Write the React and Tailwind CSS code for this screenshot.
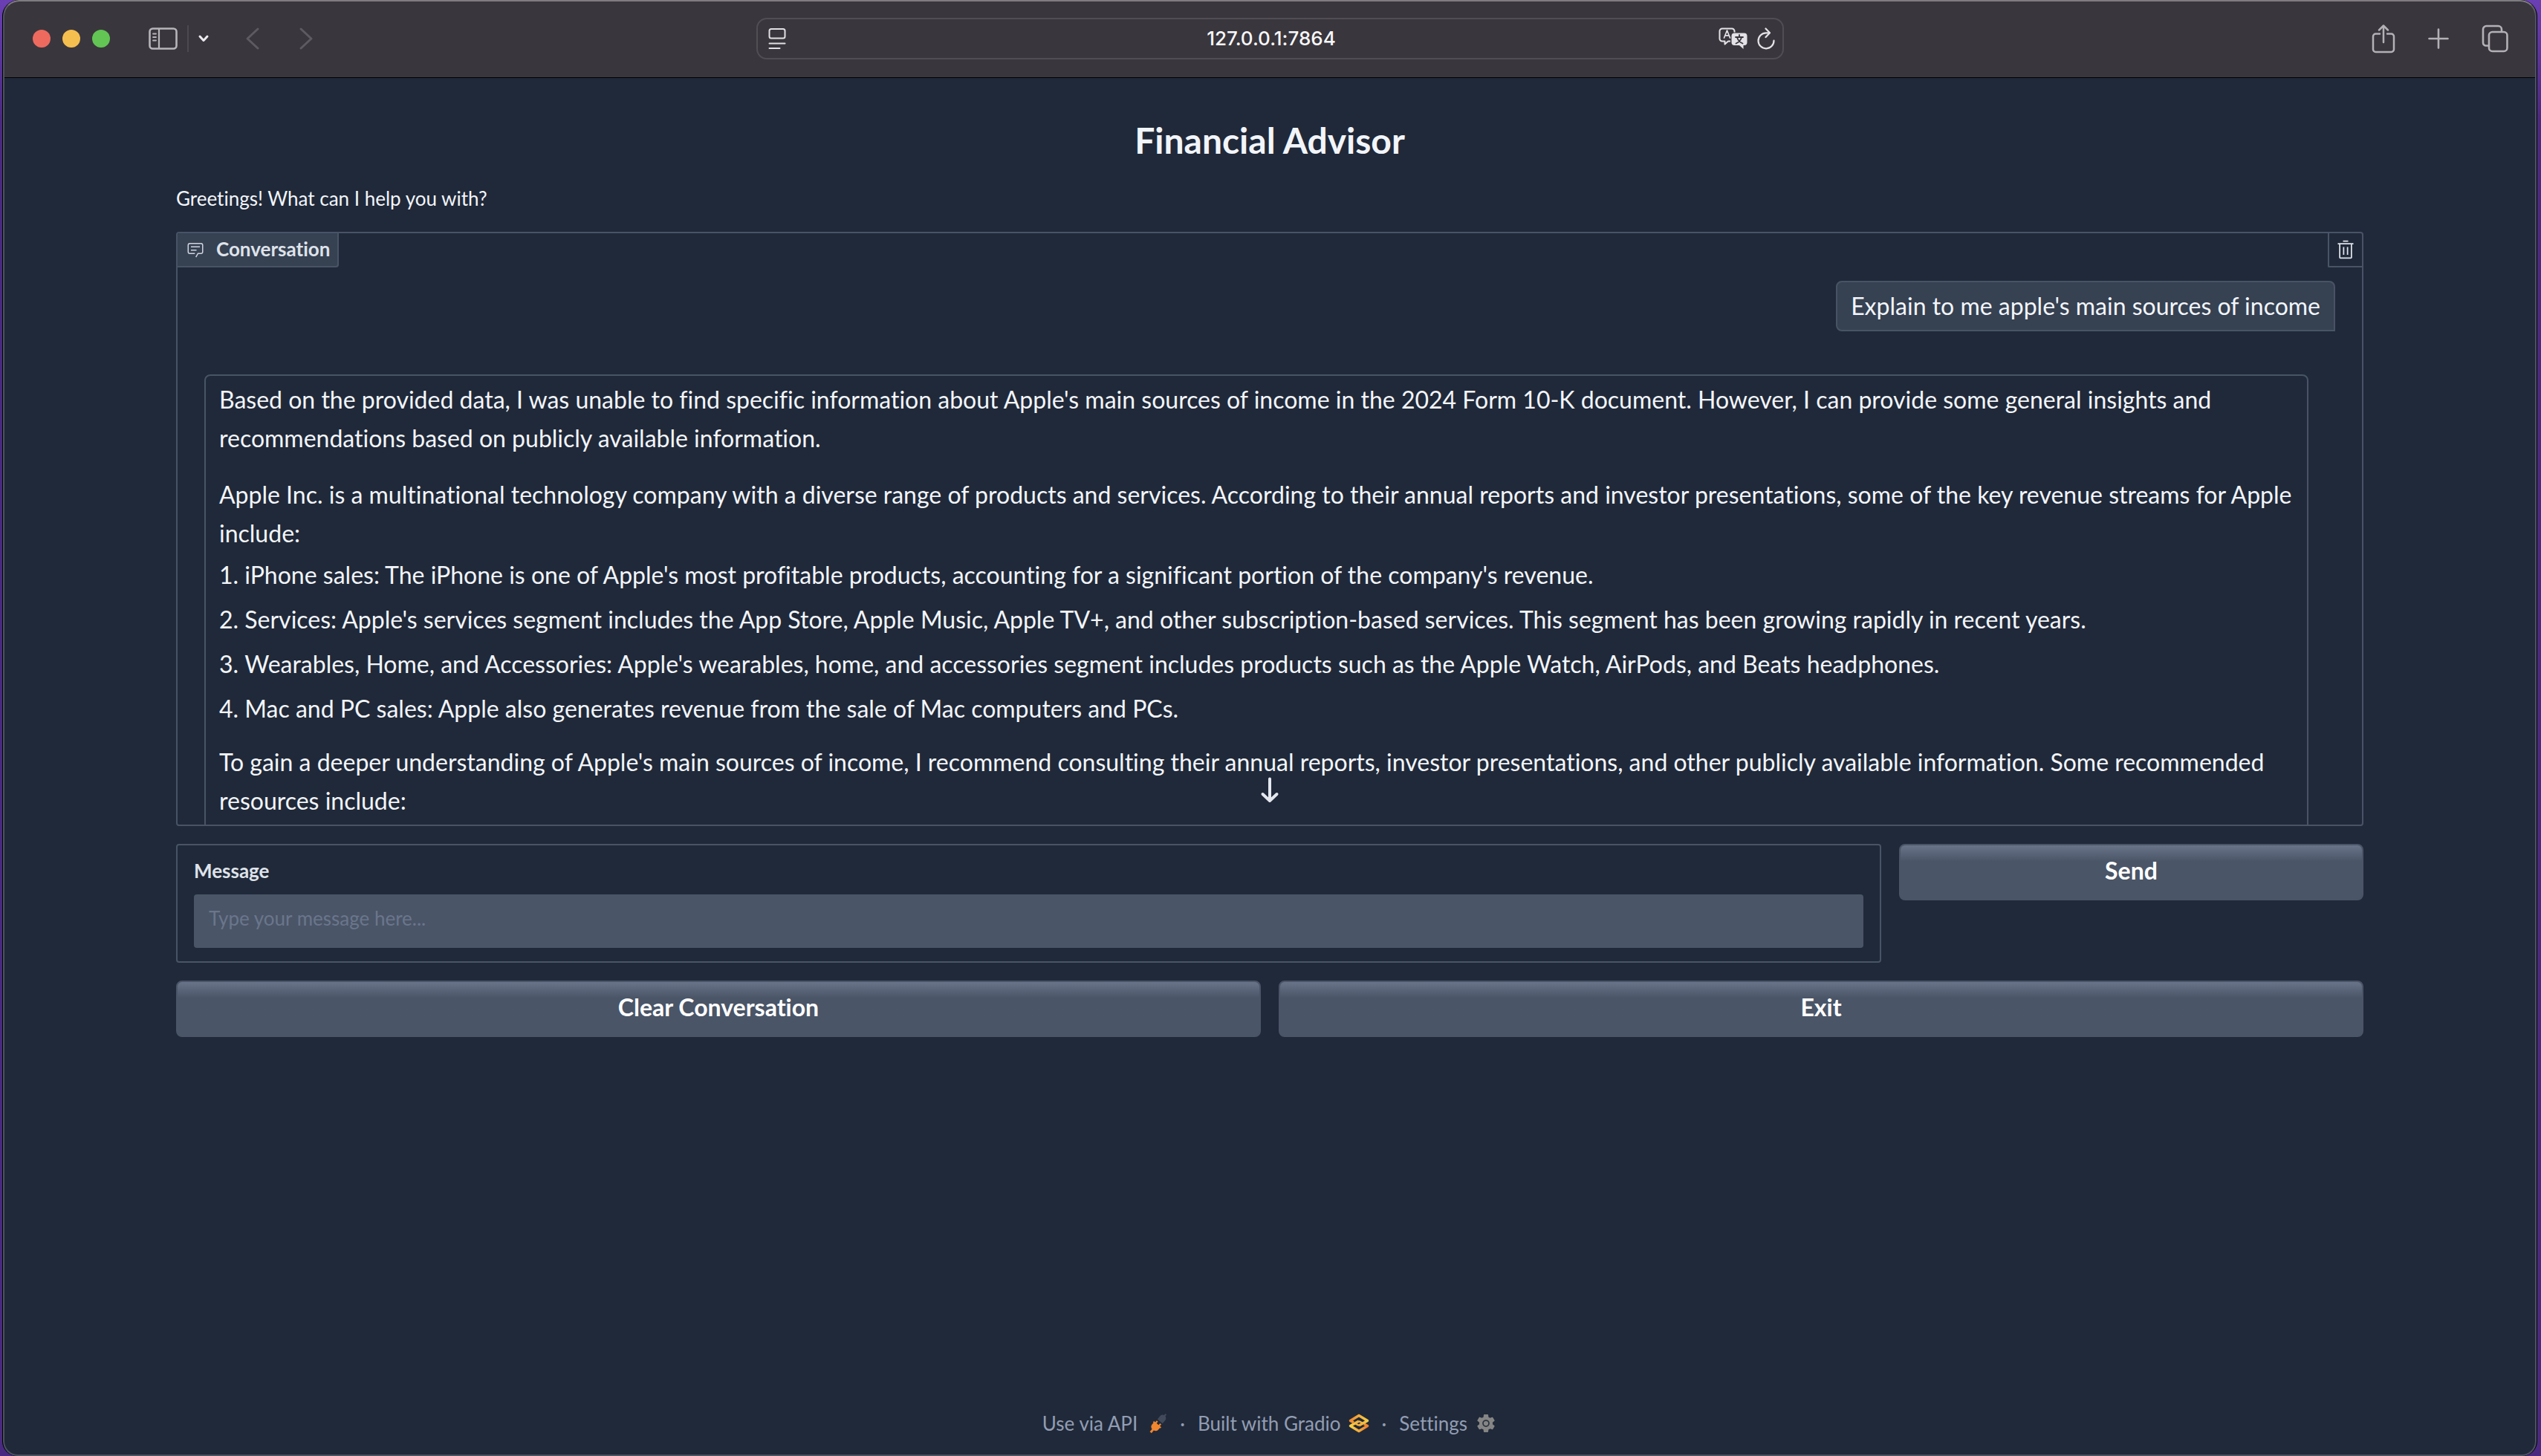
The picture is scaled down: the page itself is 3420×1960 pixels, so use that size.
const listItems = [
  "iPhone sales: The iPhone is one of Apple's most profitable products, accounting for a significant portion of the company's revenue.",
  "Services: Apple's services segment includes the App Store, Apple Music, Apple TV+, and other subscription-based services. This segment has been growing rapidly in recent years.",
  "Wearables, Home, and Accessories: Apple's wearables, home, and accessories segment includes products such as the Apple Watch, AirPods, and Beats headphones.",
  "Mac and PC sales: Apple also generates revenue from the sale of Mac computers and PCs.",
];

function SidebarIcon() {
  return (
    <svg width="40" height="32" viewBox="0 0 40 32" fill="none" stroke="#b7b5ba" strokeLinecap="round">
      <rect x="1.5" y="2.5" width="36" height="27" rx="4" strokeWidth="2.6" />
      <path d="M14 3v26" strokeWidth="2.2" />
      <path d="M6 9.500h4M6 14h4M6 18.500h4" strokeWidth="1.8" />
    </svg>
  );
}

function SmallChevron() {
  return (
    <svg width="16" height="12" viewBox="0 0 16 12" fill="none" stroke="#eceaee" strokeWidth="3" strokeLinecap="round" strokeLinejoin="round">
      <path d="M3 3l5 5.500L13 3" />
    </svg>
  );
}

function NavChevron({ forward }) {
  return (
    <svg width="20" height="32" viewBox="0 0 20 32" fill="none" stroke="#5d5a61" strokeWidth="3" strokeLinecap="round" strokeLinejoin="round">
      <path d={forward ? "M3 3l14 13L3 29" : "M17 3L3 16l14 13"} />
    </svg>
  );
}

function ReaderIcon() {
  return (
    <svg width="24" height="30" viewBox="0 0 24 30" fill="none" stroke="#e2e0e4" strokeWidth="2" strokeLinecap="round">
      <rect x="1.500" y="2" width="21" height="12.500" rx="2.500" />
      <path d="M1.500 21.500h21M1.500 28h14" />
    </svg>
  );
}

function TranslateIcon() {
  return (
    <svg width="40" height="30" viewBox="0 0 40 30" fill="none">
      <path d="M16 18.500h-3L8.500 22.500v-4H5a3.500 3.500 0 0 1-3.500-3.500V5A3.500 3.500 0 0 1 5 1.500h13A3.500 3.500 0 0 1 21.500 5v1.500" stroke="#e4e2e6" strokeWidth="2" strokeLinejoin="round" />
      <path d="M7.500 14l4-10 4 10M9 10.800h5" stroke="#e4e2e6" strokeWidth="1.700" strokeLinecap="round" strokeLinejoin="round" />
      <path d="M21.500 7.500h13a4 4 0 0 1 4 4v8.500a4 4 0 0 1-4 4h-1V29L28 24h-6.500a4 4 0 0 1-4-4v-8.500a4 4 0 0 1 4-4z" fill="#e4e2e6" />
      <path d="M28 10v3M23 13h10M31 13.500c-1.200 3.500-4 6.500-7.500 8M25 13.500c1.200 3.500 4 6.500 7.500 8" stroke="#38343b" strokeWidth="1.800" strokeLinecap="round" />
    </svg>
  );
}

function ReloadIcon() {
  return (
    <svg width="24" height="30" viewBox="0 0 24 30" fill="none" stroke="#e4e2e6" strokeWidth="2.200" strokeLinecap="round" strokeLinejoin="round">
      <path d="M16.500 7.300H12A10.500 10.500 0 1 0 22.500 17.500" />
      <path d="M11.500 1.500l5.500 5.800-5.500 5.700" />
    </svg>
  );
}

function ShareIcon() {
  return (
    <svg width="32" height="40" viewBox="0 0 32 40" fill="none" stroke="#b3b1b6" strokeWidth="2.500" strokeLinecap="round" strokeLinejoin="round">
      <path d="M11 13.500H5.500a3.500 3.500 0 0 0-3.500 3.500v17.500a3.500 3.500 0 0 0 3.500 3.500h21a3.500 3.500 0 0 0 3.500-3.500V17a3.500 3.500 0 0 0-3.500-3.500H21" />
      <path d="M16 25V3M10 8.500L16 2.500l6 6" />
    </svg>
  );
}

function PlusIcon() {
  return (
    <svg width="28" height="28" viewBox="0 0 28 28" fill="none" stroke="#b3b1b6" strokeWidth="2.600" strokeLinecap="round">
      <path d="M14 1.500v25M1.500 14h25" />
    </svg>
  );
}

function TabsIcon() {
  return (
    <svg width="36" height="38" viewBox="0 0 36 38" fill="none" stroke="#b3b1b6" strokeWidth="2.600">
      <path d="M10 28.500H6A4 4 0 0 1 2 24.500V6.500A4.500 4.500 0 0 1 6.500 2h16A4.500 4.500 0 0 1 27 6.500v3" />
      <rect x="10" y="10" width="24.500" height="26" rx="4.500" />
    </svg>
  );
}

function ChatIcon() {
  return (
    <svg width="24" height="24" viewBox="0 0 32 32" fill="#cfd5df">
      <path d="M17.740 30L16 29l4-7h6a2 2 0 0 0 2-2V8a2 2 0 0 0-2-2H6a2 2 0 0 0-2 2v12a2 2 0 0 0 2 2h9v2H6a4 4 0 0 1-4-4V8a4 4 0 0 1 4-4h20a4 4 0 0 1 4 4v12a4 4 0 0 1-4 4h-4.840Z" />
      <path d="M8 10h16v2H8zM8 16h10v2H8z" />
    </svg>
  );
}

function TrashIcon() {
  return (
    <svg width="28" height="28" viewBox="0 0 32 32" fill="#dfe3ea">
      <path d="M12 12h2v12h-2zM18 12h2v12h-2zM4 6v2h2v20a2 2 0 0 0 2 2h16a2 2 0 0 0 2-2V8h2V6zm4 22V8h16v20zM12 2h8v2h-8z" />
    </svg>
  );
}

function ArrowDown() {
  return (
    <svg width="28" height="36" viewBox="0 0 28 36" fill="none" stroke="#e4e7ee" strokeWidth="4" strokeLinecap="round" strokeLinejoin="round">
      <path d="M14 2.500v29M4.500 23l9.500 9 9.500-9" />
    </svg>
  );
}

function PlugIcon() {
  return (
    <svg width="24" height="30" viewBox="0 0 24 30">
      <g transform="rotate(40 12 15)">
        <path d="M11 -1h2v4h-2z" fill="#414a5a" />
        <path d="M7.500 6a4.500 4.500 0 0 1 9 0v5.500h-9z" fill="#414a5a" />
        <path d="M8 13.500h2.200v4H8zM13.800 13.500H16v4h-2.200z" fill="#f0862f" />
        <path d="M5.500 16.500h13v2h-1v3a5 5 0 0 1-4 4.800V31h-3v-4.700a5 5 0 0 1-4-4.800v-3h-1z" fill="#f0862f" />
      </g>
    </svg>
  );
}

function GradioLogo() {
  return (
    <svg width="28" height="26" viewBox="0 0 28 26" fill="none" strokeWidth="3.500" strokeLinejoin="round">
      <defs>
        <linearGradient id="gold" x1="0" y1="0" x2="1" y2="0">
          <stop offset="0" stopColor="#f08a32" />
          <stop offset="1" stopColor="#f5cf45" />
        </linearGradient>
        <linearGradient id="amber" x1="0" y1="0" x2="1" y2="0">
          <stop offset="0" stopColor="#f6d446" />
          <stop offset="1" stopColor="#ee8130" />
        </linearGradient>
      </defs>
      <path d="M14 10L2.500 16.500 14 23.500 25.500 16.500 21 14" stroke="url(#amber)" />
      <path d="M14 16l11.500-6.500L14 2.500 2.500 9.500 7 12" stroke="url(#gold)" />
      <path d="M14 10l5 2.800M14 16l-5-2.800" stroke="#f3b53c" strokeWidth="2.500" />
    </svg>
  );
}

function GearIcon() {
  return (
    <svg width="30" height="30" viewBox="0 0 24 24">
      <path
        fill="#858585"
        d="M19.140 12.940c.04-.3.06-.61.06-.94 0-.32-.02-.64-.07-.94l2.030-1.580c.18-.14.23-.41.12-.61l-1.920-3.320c-.12-.22-.37-.29-.59-.22l-2.390.96c-.5-.38-1.030-.7-1.620-.94l-.36-2.540c-.04-.24-.24-.41-.48-.41h-3.840c-.24 0-.43.17-.47.41l-.36 2.540c-.59.24-1.130.57-1.620.94l-2.390-.96c-.22-.08-.47 0-.59.22L2.740 8.870c-.12.21-.08.47.12.61l2.030 1.580c-.05.3-.09.63-.09.94s.02.64.07.94l-2.030 1.580c-.18.14-.23.41-.12.61l1.920 3.320c.12.22.37.29.59.22l2.390-.96c.5.38 1.030.7 1.620.94l.36 2.540c.05.24.24.41.48.41h3.840c.24 0 .44-.17.47-.41l.36-2.540c.59-.24 1.130-.56 1.620-.94l2.390.96c.22.08.47 0 .59-.22l1.920-3.320c.12-.22.07-.47-.12-.61z"
      />
      <circle cx="12" cy="12" r="3.200" fill="none" stroke="#2b3341" strokeWidth="1.400" />
    </svg>
  );
}

function Toolbar() {
  return (
    <header className="grid h-[105px] shrink-0 grid-cols-[1fr_1383px_1fr] items-center border-b border-black bg-[#3a363d] font-[Inter,sans-serif]">
      <div className="flex items-center pl-[38px]">
        <div className="flex gap-4">
          <span className="size-6 rounded-full bg-[#ee6a5f]" />
          <span className="size-6 rounded-full bg-[#f5bf4f]" />
          <span className="size-6 rounded-full bg-[#62c554]" />
        </div>
        <button aria-label="Show sidebar" className="ml-[52px]">
          <SidebarIcon />
        </button>
        <span className="ml-3 h-9 w-[2px] bg-[#4c494f]" />
        <button aria-label="Tab groups" className="ml-3">
          <SmallChevron />
        </button>
        <button aria-label="Back" className="ml-12">
          <NavChevron />
        </button>
        <button aria-label="Forward" className="ml-[52px]">
          <NavChevron forward />
        </button>
      </div>
      <div className="flex h-14 items-center rounded-[14px] border-2 border-[#504e54] px-[10px]">
        <div className="flex flex-1 items-center pl-1">
          <ReaderIcon />
        </div>
        <div className="text-[26px] leading-8 font-medium text-[#f7f7f8]">127.0.0.1:7864</div>
        <div className="flex flex-1 items-center justify-end gap-3">
          <button aria-label="Translate page">
            <TranslateIcon />
          </button>
          <button aria-label="Reload">
            <ReloadIcon />
          </button>
        </div>
      </div>
      <div className="flex items-center justify-end pr-9">
        <button aria-label="Share">
          <ShareIcon />
        </button>
        <button aria-label="New tab" className="ml-11">
          <PlusIcon />
        </button>
        <button aria-label="Tab overview" className="ml-11">
          <TabsIcon />
        </button>
      </div>
    </header>
  );
}

function ActionButton({ children, className = "" }) {
  return (
    <button
      className={
        "h-[76px] rounded-lg border-2 border-[#4a5567] bg-[#4a5567] bg-linear-to-b from-[#69748a] to-[#4a5567] to-30% pb-1 text-[32px] leading-[40px] font-bold text-white " +
        className
      }
    >
      {children}
    </button>
  );
}

function Conversation() {
  return (
    <section className="relative flex h-[800px] flex-col overflow-hidden rounded-[4px] border-2 border-[#485466]">
      <div className="flex shrink-0 justify-between">
        <h2 className="flex h-[46px] items-center gap-4 rounded-br-[4px] border-r-2 border-b-2 border-[#485466] bg-[#364152] pr-[10px] pl-3 text-[26px] leading-8 font-bold text-[#dfe3ea]">
          <ChatIcon />
          <span className="pb-[2px]">Conversation</span>
        </h2>
        <button aria-label="Clear" className="flex size-[46px] items-center justify-center rounded-bl-[2px] border-b-2 border-l-2 border-[#485466]">
          <TrashIcon />
        </button>
      </div>
      <div className="flex flex-col gap-[58px] px-9 pt-[18px] text-[32px] leading-[52px] text-[#f2f5fa]">
        <div className="self-end rounded-lg rounded-br-none border-2 border-[#485466] bg-[#364152] px-[18px] py-[6px]">
          Explain to me apple's main sources of income
        </div>
        <div className="mr-9 rounded-lg rounded-bl-none border-2 border-[#485466] pt-[6px] pr-3 pb-24 pl-[18px]">
          <p>
            Based on the provided data, I was unable to find specific information about Apple's main sources of income in the 2024 Form 10-K
            document. However, I can provide some general insights and recommendations based on publicly available information.
          </p>
          <p className="mt-6">
            Apple Inc. is a multinational technology company with a diverse range of products and services. According to their annual reports and
            investor presentations, some of the key revenue streams for Apple include:
          </p>
          <ol className="mt-1 mb-5 flex list-inside list-decimal flex-col gap-2">
            {listItems.map((item) => (
              <li key={item}>{item}</li>
            ))}
          </ol>
          <p>
            To gain a deeper understanding of Apple's main sources of income, I recommend consulting their annual reports, investor
            presentations, and other publicly available information. Some recommended resources include:
          </p>
        </div>
      </div>
      <button aria-label="Scroll to bottom" className="absolute bottom-7 left-1/2 -translate-x-1/2">
        <ArrowDown />
      </button>
    </section>
  );
}

export default function App() {
  return (
    <div className="flex min-h-screen flex-col bg-[#4a2a80] bg-linear-to-b from-[#6b3fb4] to-[#4a2a80] to-[160px] pr-[5px] pl-[3px] [font-variant-ligatures:none]">
      <div className="relative flex flex-1 flex-col overflow-hidden rounded-t-[22px] rounded-b-[20px] border-x border-black bg-[#202939] px-[2px] font-[Lato,sans-serif]">
        <Toolbar />
        <main className="mx-auto flex w-full max-w-[3072px] flex-1 flex-col px-16 pt-[54px]">
          <h1 className="text-center text-[48px] leading-[60px] font-bold text-[#f2f5fa]">Financial Advisor</h1>
          <p className="mt-7 text-[26px] leading-[40px] text-[#f2f5fa]">Greetings! What can I help you with?</p>
          <div className="mt-[25px] flex flex-col gap-6">
            <Conversation />
            <div className="flex items-start gap-6">
              <div className="flex flex-1 flex-col rounded-[4px] border-2 border-[#485466] px-[22px] pt-4 pb-[18px]">
                <label htmlFor="message" className="text-[26px] leading-9 font-bold text-[#dfe3ea]">
                  Message
                </label>
                <input
                  id="message"
                  type="text"
                  placeholder="Type your message here..."
                  className="mt-[14px] h-[72px] rounded-[4px] bg-[#4a5567] px-5 pb-2 text-[26px] text-white placeholder:text-[#6a768c]"
                />
              </div>
              <ActionButton className="w-[625px]">Send</ActionButton>
            </div>
            <div className="grid grid-cols-2 gap-6">
              <ActionButton>Clear Conversation</ActionButton>
              <ActionButton>Exit</ActionButton>
            </div>
          </div>
          <footer className="mt-auto flex items-center justify-center pb-[26px] text-[26px] leading-9 text-[#929db3]">
            <button className="flex items-center gap-4">
              Use via API
              <PlugIcon />
            </button>
            <span className="mx-[17px]">·</span>
            <a href="#gradio" className="flex items-center gap-[10px]">
              Built with Gradio
              <GradioLogo />
            </a>
            <span className="mx-[17px]">·</span>
            <button className="flex items-center gap-[10px]">
              Settings
              <GearIcon />
            </button>
          </footer>
        </main>
        <div className="pointer-events-none absolute inset-0 rounded-t-[22px] rounded-b-[20px] border-2 border-white/20 border-t-white/35" />
      </div>
    </div>
  );
}
